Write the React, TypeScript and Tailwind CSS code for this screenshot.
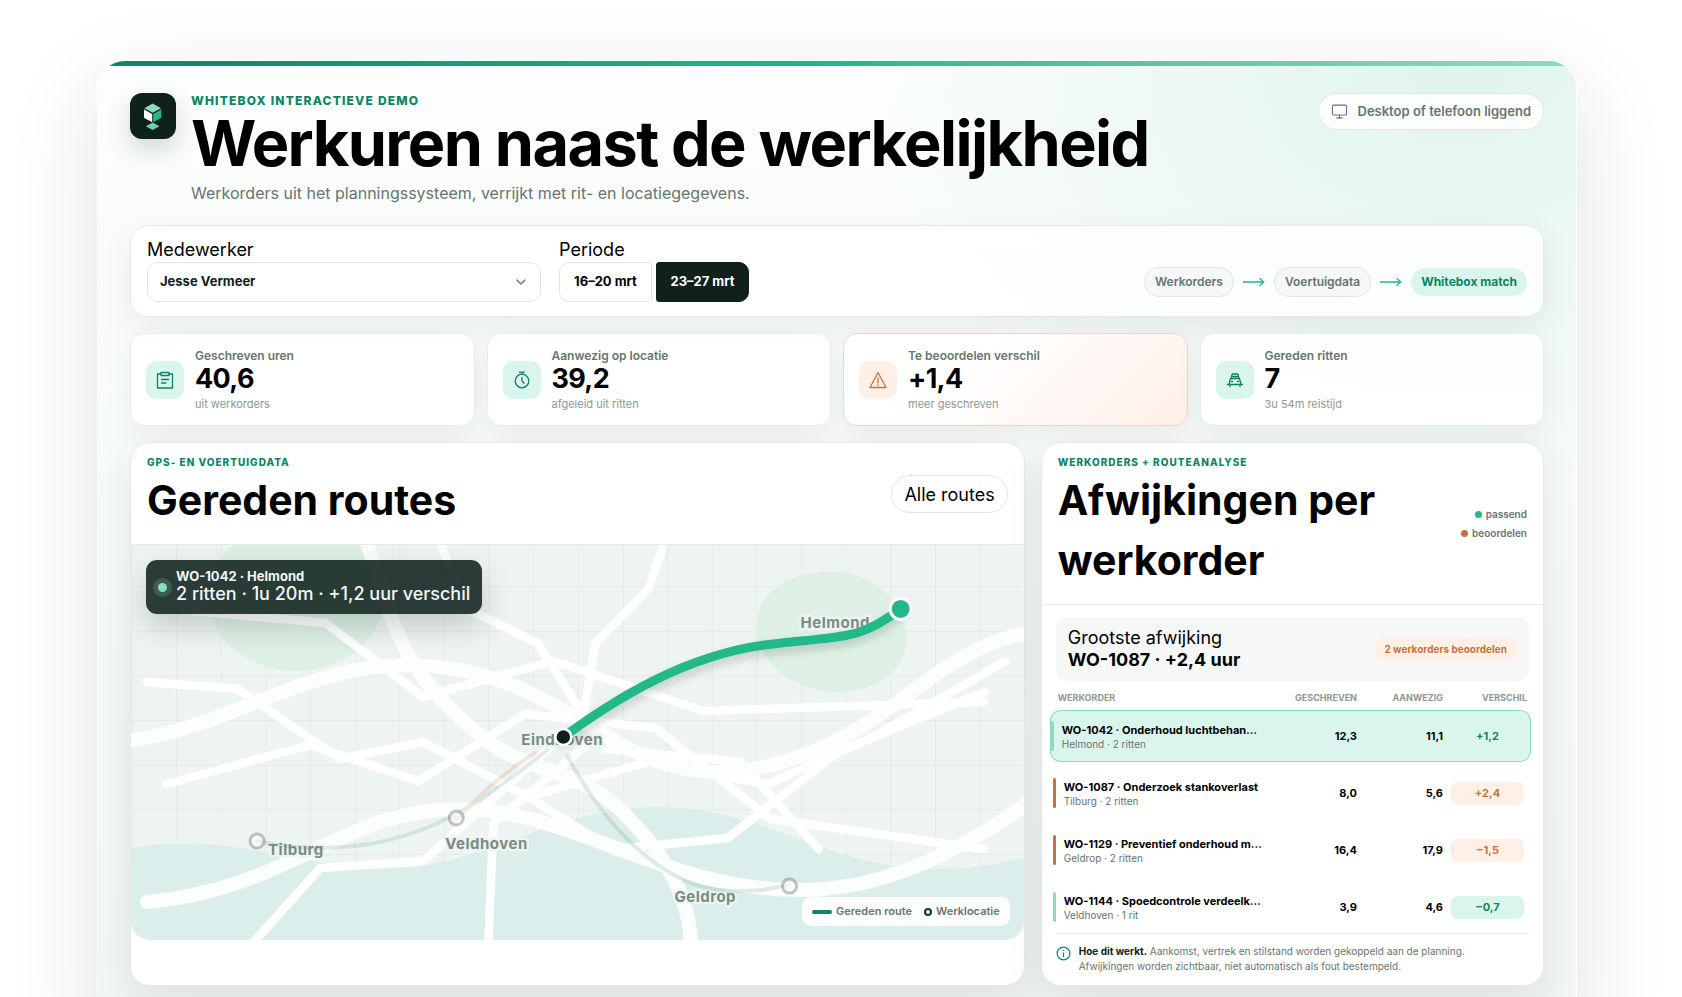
import { useState } from "react";
import type { ReactNode } from "react";
import { ChevronDown, Monitor } from "lucide-react";
import clsx from "clsx";

type Tone = "ok" | "review";

type Order = {
  id: string;
  title: string;
  place: string;
  written: string;
  present: string;
  diff: string;
  tone: Tone;
};

const orders: Order[] = [
  { id: "WO-1042", title: "Onderhoud luchtbehan…", place: "Helmond · 2 ritten", written: "12,3", present: "11,1", diff: "+1,2", tone: "ok" },
  { id: "WO-1087", title: "Onderzoek stankoverlast", place: "Tilburg · 2 ritten", written: "8,0", present: "5,6", diff: "+2,4", tone: "review" },
  { id: "WO-1129", title: "Preventief onderhoud m…", place: "Geldrop · 2 ritten", written: "16,4", present: "17,9", diff: "−1,5", tone: "review" },
  { id: "WO-1144", title: "Spoedcontrole verdeelk…", place: "Veldhoven · 1 rit", written: "3,9", present: "4,6", diff: "−0,7", tone: "ok" },
];

const iconProps = {
  width: 20,
  height: 20,
  viewBox: "0 0 20 20",
  fill: "none",
  stroke: "currentColor",
  strokeWidth: 1.3,
  strokeLinejoin: "round" as const,
  strokeLinecap: "round" as const,
};

const ClipboardIcon = () => (
  <svg {...iconProps}>
    <path d="M6 4H2.500v14h15V4H14" />
    <path d="M6 2.500h8v3H6z" />
    <path d="M6.500 9.500h7M6.500 13h4.500" />
  </svg>
);

const TimerIcon = () => (
  <svg {...iconProps}>
    <circle cx="10" cy="11" r="6.800" />
    <path d="M10 7.500V11l2 2.200M7.500 2.200h5M10 2.200v2" />
  </svg>
);

const WarningIcon = () => (
  <svg {...iconProps}>
    <path d="M10 2.500 18 17.500H2z" />
    <path d="M10 8v5M10 15v.4" />
  </svg>
);

const CarIcon = () => (
  <svg {...iconProps}>
    <path d="M6 8.500 7.200 4h5.600L14 8.500M7 6.500h6M5.500 8.500h9L16 14.500M5.500 8.500 4 14.500M2.500 14.500h15M5 14.500v2M15 14.500v2M6.500 11.500h1M12.500 11.500h1" />
  </svg>
);

const Logo = () => (
  <div className="size-[46px] shrink-0 rounded-xl bg-[#10211c] shadow-[0_10px_24px_rgba(16,33,28,0.18)]">
    <svg viewBox="0 0 46 46" aria-hidden="true">
      <path d="M22.700 10.500 31 15.300 22.700 19.800 14.300 15.300z" fill="#8adcc0" />
      <path d="M14 16.500 22.200 21V29.300L14 24.800z" fill="#fff" />
      <path d="M31.300 16.500 23.200 21V29.300L31.300 24.800z" fill="#22b88a" />
      <path d="M22.700 29.500 29.500 33.200 22.700 36.900 15.800 33.200z" fill="#6fd0ae" />
    </svg>
  </div>
);

const FlowArrow = () => (
  <svg width="22" height="10" viewBox="0 0 22 10" fill="none" stroke="#22b88a" strokeWidth="1.300" aria-hidden="true">
    <path d="M0 5h20.500M16.500 1.300 20.800 5l-4.300 3.700" />
  </svg>
);

const Kpi = ({ label, value, note, warn, children }: { label: string; value: string; note: string; warn?: boolean; children: ReactNode }) => (
  <div
    className={clsx(
      "flex h-[93px] items-center gap-[11px] rounded-[14px] border px-[15px] shadow-[0_10px_28px_rgba(16,33,28,0.06)]",
      warn ? "border-[#f1d5c4] bg-linear-135 from-white from-35% to-[#fff0e7]" : "border-[#e6eeeb] bg-white/90"
    )}
  >
    <span
      className={clsx(
        "flex size-[38px] items-center justify-center rounded-[10px]",
        warn ? "bg-[#fff0e7] text-[#c9713a]" : "bg-[#daf6ec] text-[#0c8465]"
      )}
    >
      {children}
    </span>
    <div>
      <div className="text-[12px] leading-4 font-semibold text-[#66756f]">{label}</div>
      <div className="text-[27px] leading-[30px] font-bold tracking-tight">{value}</div>
      <div className="mt-0.5 text-[11px] leading-4 text-[#8c9994]">{note}</div>
    </div>
  </div>
);

const PanelHead = ({ kicker, title, children }: { kicker: string; title: ReactNode; children: ReactNode }) => (
  <div className="flex items-center justify-between border-b border-[#e3ebe8] px-4 pt-[15px] pb-3.5">
    <div>
      <p className="text-[10px] leading-2 font-extrabold tracking-widest text-[#0c8465] uppercase">{kicker}</p>
      <h2 className="mt-1 text-[41px] leading-[60px] font-bold">{title}</h2>
    </div>
    {children}
  </div>
);

const minorRoads = [
  "M16 137 107 144 209 214 292 197 397 252 486 307",
  "M35 239 179 200 287 236 394 169 524 183 639 274 852 304",
  "M60 66 194 78 292 152 422 116 572 166 852 157",
  "M308-6 332 62 406 98 455 175",
  "M534-6 517 44 464 98 452 170",
  "M874 116 742 192 636 239 572 228",
  "M853 147 708 206 596 293 486 304",
  "M474 204 609 217 687 304",
  "M452 203 362 278 357 402",
  "M430 192 292 316 189 323 118 402",
  "M397 252 519 216",
];

const mainRoads = [
  "M-4 196C100 182 170 122 272 120C370 120 420 160 480 194C530 224 580 236 640 220C760 190 800 105 896 88",
  "M16 357C160 344 210 264 329 264C440 264 530 345 669 345C760 345 840 298 896 258",
  "M234-8C262 80 270 130 356 196C400 228 450 225 490 266C535 310 558 350 560 402",
];

const places = [
  { name: "Helmond", x: 669, y: 83 },
  { name: "Eindhoven", x: 390, y: 200 },
  { name: "Tilburg", x: 137, y: 310 },
  { name: "Veldhoven", x: 314, y: 304 },
  { name: "Geldrop", x: 543, y: 357 },
];

const RouteMap = () => (
  <svg viewBox="0 0 892 395" preserveAspectRatio="xMidYMid slice" className="block h-full w-full" role="img" aria-label="Gereden routes">
    <defs>
      <pattern id="grid" width="44.600" height="44.600" x="0.500" y="-3.300" patternUnits="userSpaceOnUse">
        <path d="M44.600 0H0V44.600" fill="none" stroke="#e3ebe8" strokeWidth="2" />
      </pattern>
      <filter id="lift" x="-10%" y="-20%" width="120%" height="150%">
        <feDropShadow dx="0" dy="5" stdDeviation="4" floodColor="#10211c" floodOpacity="0.2" />
      </filter>
    </defs>
    <rect width="892" height="398" fill="#eef4f2" />
    <rect width="892" height="398" fill="url(#grid)" />
    <ellipse cx="165" cy="52" rx="88" ry="74" fill="#def0e4" />
    <path d="M697 27C745 25 775 62 775 93C775 128 742 147 706 147C664 147 625 118 625 83C625 48 655 28 697 27z" fill="#def0e4" />
    <path d="M0 303C110 285 190 330 266 323C370 316 420 262 529 262C630 262 700 324 802 324C840 324 870 318 892 313V398H0z" fill="#dceeeb" />
    <g fill="none" stroke="#fff" strokeWidth="8.500" strokeLinecap="round">
      {minorRoads.map((d) => (
        <path key={d} d={d} />
      ))}
    </g>
    <g fill="none" stroke="#fbfefd" strokeWidth="14" strokeLinecap="round">
      {mainRoads.map((d) => (
        <path key={d} d={d} />
      ))}
    </g>
    <g className="font-bold" fontSize="15" letterSpacing="0.5" fill="#7a8b85" stroke="#eef4f2" strokeWidth="5" strokeLinejoin="round" paintOrder="stroke">
      {places.map((p) => (
        <text key={p.name} x={p.x} y={p.y}>
          {p.name}
        </text>
      ))}
    </g>
    <g fill="none" strokeWidth="4" strokeLinecap="round" opacity="0.16">
      <path d="M126 296C200 312 270 300 330 266C365 246 395 222 416 205" stroke="#4f8a99" />
      <path d="M325 274C350 248 375 225 404 208" stroke="#c9713a" />
      <path d="M436 211C470 275 530 345 600 346C625 347 640 343 658 340" stroke="#4c8a63" />
    </g>
    <g fill="#fff" fillOpacity="0.5" stroke="#10211c" strokeOpacity="0.25" strokeWidth="3">
      <circle cx="126" cy="296" r="7" />
      <circle cx="325" cy="273" r="7" />
      <circle cx="658" cy="341" r="7" />
    </g>
    <path d="M432 192C500 142 570 105 650 98C720 91 732 92 769 64" fill="none" stroke="#22b88a" strokeWidth="9" strokeLinecap="round" filter="url(#lift)" />
    <circle cx="432" cy="192" r="8" fill="#10211c" stroke="#fff" strokeWidth="2.500" />
    <circle cx="769" cy="64" r="10.500" fill="#22b88a" stroke="#fff" strokeWidth="3" />
  </svg>
);

export default function App() {
  const [period, setPeriod] = useState("23–27 mrt");
  const [selected, setSelected] = useState("WO-1042");

  return (
    <div className="min-h-screen overflow-hidden bg-white pt-[60px] pr-2 font-['Inter',sans-serif] text-black">
      <main className="relative mx-auto max-w-[1480px] overflow-hidden rounded-[28px] border border-white bg-[radial-gradient(ellipse_600px_440px_at_92%_0%,#e0f4ec,transparent),linear-gradient(180deg,#fcfefd,#f6faf8_45%,#f1f5f3)] px-8 pt-8 pb-12 shadow-[0_30px_90px_rgba(16,33,28,0.13)]">
        <div className="absolute inset-x-0 top-0 h-[5px] bg-linear-to-r from-[#0c8465] via-[#22b88a] to-[#8adcc0]" />

        <header className="flex items-start justify-between">
          <div className="flex gap-[15px]">
            <Logo />
            <div>
              <p className="text-[12px] leading-4 font-extrabold tracking-widest text-[#0c8465] uppercase">Whitebox interactieve demo</p>
              <h1 className="text-[63px] leading-[68px] font-bold tracking-tight">Werkuren naast de werkelijkheid</h1>
              <p className="mt-1 text-[16px] leading-6 text-[#66756f]">
                Werkorders uit het planningssysteem, verrijkt met rit- en locatiegegevens.
              </p>
            </div>
          </div>
          <div className="flex h-[37px] shrink-0 items-center gap-2.5 rounded-full border border-[#dde7e3] bg-white/85 px-3 text-[13px] font-semibold text-[#66756f]">
            <Monitor size={17} strokeWidth={1.5} />
            Desktop of telefoon liggend
          </div>
        </header>

        <section className="mt-5 flex items-end justify-between rounded-[18px] border border-[#e3ebe8] bg-white/85 px-4 pt-3 pb-3.5 shadow-[0_12px_34px_rgba(16,33,28,0.07)]">
          <div className="flex gap-[18px]">
            <div className="w-[394px]">
              <label htmlFor="employee" className="block text-[18px] leading-6">Medewerker</label>
              <div className="relative">
                <select id="employee" className="h-10 w-full appearance-none rounded-[10px] border border-[#dde7e3] bg-white px-3 text-[13px] font-bold text-[#10211c]">
                  <option>Jesse Vermeer</option>
                </select>
                <ChevronDown size={16} strokeWidth={2} className="pointer-events-none absolute top-3 right-3 text-[#66756f]" />
              </div>
            </div>
            <fieldset>
              <legend className="text-[18px] leading-6">Periode</legend>
              <div className="flex gap-1">
                {["16–20 mrt", "23–27 mrt"].map((p, i) => (
                  <button
                    key={p}
                    onClick={() => setPeriod(p)}
                    aria-pressed={p === period}
                    className={clsx(
                      "h-10 w-[93px] border text-[13px] font-bold",
                      i === 0 ? "rounded-l-[10px] rounded-r-[3px]" : "rounded-l-[3px] rounded-r-[10px]",
                      p === period ? "border-[#10211c] bg-[#10211c] text-white" : "border-[#dde7e3] bg-white"
                    )}
                  >
                    {p}
                  </button>
                ))}
              </div>
            </fieldset>
          </div>
          <div className="mb-[5px] flex items-center gap-[9px] text-[12px] font-semibold text-[#66756f]">
            <span className="flex h-[30px] items-center rounded-full border border-[#dde7e3] bg-[#f6f8f7] px-2.5">Werkorders</span>
            <FlowArrow />
            <span className="flex h-[30px] items-center rounded-full border border-[#dde7e3] bg-[#f6f8f7] px-2.5">Voertuigdata</span>
            <FlowArrow />
            <span className="flex h-7 items-center rounded-full bg-[#daf6ec] px-2.5 font-bold text-[#0c8465]">Whitebox match</span>
          </div>
        </section>

        <section className="mt-4 grid grid-cols-4 gap-3">
          <Kpi label="Geschreven uren" value="40,6" note="uit werkorders"><ClipboardIcon /></Kpi>
          <Kpi label="Aanwezig op locatie" value="39,2" note="afgeleid uit ritten"><TimerIcon /></Kpi>
          <Kpi label="Te beoordelen verschil" value="+1,4" note="meer geschreven" warn><WarningIcon /></Kpi>
          <Kpi label="Gereden ritten" value="7" note="3u 54m reistijd"><CarIcon /></Kpi>
        </section>

        <div className="mt-4 grid grid-cols-[16fr_9fr] gap-4">
          <section className="overflow-hidden rounded-[20px] border border-[#e3ebe8] bg-white shadow-[0_14px_40px_rgba(16,33,28,0.09)]">
            <PanelHead kicker="GPS- en voertuigdata" title="Gereden routes">
              <button className="h-[38px] rounded-full border border-[#dde7e3] bg-white px-3 text-[18px]">Alle routes</button>
            </PanelHead>
            <div className="relative h-[395px] overflow-hidden rounded-b-[19px]">
              <RouteMap />
              <div className="absolute top-[15px] left-[15px] flex h-[54px] items-center gap-1 rounded-[11px] bg-[#10211c]/88 pr-3 pl-[7px] text-[#f3f6f5] shadow-[0_12px_30px_rgba(16,33,28,0.2)]">
                <span className="flex size-[19px] items-center justify-center rounded-full bg-[#8adcc0]/20">
                  <span className="size-[9px] rounded-full bg-[#8adcc0]" />
                </span>
                <div>
                  <div className="text-[13px] leading-[14px] font-bold">WO-1042 · Helmond</div>
                  <div className="text-[18px] leading-[22px] font-medium">2 ritten · 1u 20m · +1,2 uur verschil</div>
                </div>
              </div>
              <div className="absolute right-3.5 bottom-3.5 flex h-[29px] items-center gap-3 rounded-[9px] bg-white/90 px-2.5 text-[11px] font-semibold text-[#66756f]">
                <span className="flex items-center gap-1">
                  <i className="h-1 w-5 rounded-full bg-[#0c8465]" />
                  Gereden route
                </span>
                <span className="flex items-center gap-1">
                  <i className="size-2 rounded-full border-2 border-[#10392c] bg-white" />
                  Werklocatie
                </span>
              </div>
            </div>
          </section>

          <section className="rounded-[20px] border border-[#e3ebe8] bg-white shadow-[0_14px_40px_rgba(16,33,28,0.09)]">
            <PanelHead
              kicker="Werkorders + routeanalyse"
              title={
                <>
                  Afwijkingen per
                  <br />
                  werkorder
                </>
              }
            >
              <ul className="flex flex-col items-end text-[10px] leading-[19px] font-semibold text-[#66756f]">
                <li className="flex items-center gap-1"><i className="size-[7px] rounded-full bg-[#22b88a]" />passend</li>
                <li className="flex items-center gap-1"><i className="size-[7px] rounded-full bg-[#c9713a]" />beoordelen</li>
              </ul>
            </PanelHead>

            <div className="mx-3.5 mt-3 flex h-16 items-center justify-between rounded-[11px] bg-[#f6f8f7] px-3">
              <div className="text-[18px] leading-[22px]">
                <div>Grootste afwijking</div>
                <div className="font-bold">WO-1087 · +2,4 uur</div>
              </div>
              <span className="flex h-6 items-center rounded-full bg-[#fff0e7] px-2.5 text-[10px] font-bold text-[#c9713a]">2 werkorders beoordelen</span>
            </div>

            <div className="mt-1 mr-3 -mb-[5px] ml-2">
              <table className="w-full table-fixed border-separate border-spacing-x-0 border-spacing-y-[5px]">
                <thead>
                  <tr className="text-right text-[9px] leading-[15px] font-bold text-[#8c9994] uppercase">
                    <th className="pl-2 text-left">Werkorder</th>
                    <th className="w-[90px]">Geschreven</th>
                    <th className="w-[86px]">Aanwezig</th>
                    <th className="w-[88px] pr-1">Verschil</th>
                  </tr>
                </thead>
                <tbody>
                  {orders.map((o) => {
                    const active = o.id === selected;
                    const edge = active ? "border-[#8adcc0] bg-[#daf6ec]" : "border-transparent";
                    return (
                      <tr key={o.id} onClick={() => setSelected(o.id)} className="h-[52px] text-[11px] font-bold">
                        <td className={clsx("rounded-l-[11px] border-y border-l", edge)}>
                          <div className={clsx("flex items-center gap-2", !active && "pl-0.5")}>
                            <i className={clsx("h-[30px] w-[3px] shrink-0 rounded-full", o.tone === "ok" ? "bg-[#8adcc0]" : "bg-[#c9713a]")} />
                            <div className="whitespace-nowrap">
                              <div className="leading-4">{o.id} · {o.title}</div>
                              <div className="text-[10px] leading-[13px] font-normal text-[#66756f]">{o.place}</div>
                            </div>
                          </div>
                        </td>
                        <td className={clsx("border-y text-right", edge)}>{o.written}</td>
                        <td className={clsx("border-y text-right", edge)}>{o.present}</td>
                        <td className={clsx("rounded-r-[11px] border-y border-r pr-1.5 pl-2", edge)}>
                          <span
                            className={clsx(
                              "flex h-[23px] items-center justify-center rounded-[7px]",
                              o.tone === "ok" ? "bg-[#daf6ec] text-[#0c8465]" : "bg-[#fff0e7] text-[#c9713a]"
                            )}
                          >
                            {o.diff}
                          </span>
                        </td>
                      </tr>
                    );
                  })}
                </tbody>
              </table>
            </div>

            <footer className="mx-3.5 flex gap-2 border-t border-[#e3ebe8] pt-2.5 pb-[11px] text-[10px] leading-[15px] text-[#66756f]">
              <svg width="15" height="15" viewBox="0 0 15 15" fill="none" stroke="#0c8465" strokeWidth="1.200" className="mt-0.5 shrink-0" aria-hidden="true">
                <circle cx="7.500" cy="7.500" r="6.400" />
                <path d="M7.500 6.500v4.500M7.500 4v1" />
              </svg>
              <p>
                <strong className="text-[#10211c]">Hoe dit werkt.</strong> Aankomst, vertrek en stilstand worden gekoppeld aan de planning.
                <br />
                Afwijkingen worden zichtbaar, niet automatisch als fout bestempeld.
              </p>
            </footer>
          </section>
        </div>
      </main>
    </div>
  );
}
